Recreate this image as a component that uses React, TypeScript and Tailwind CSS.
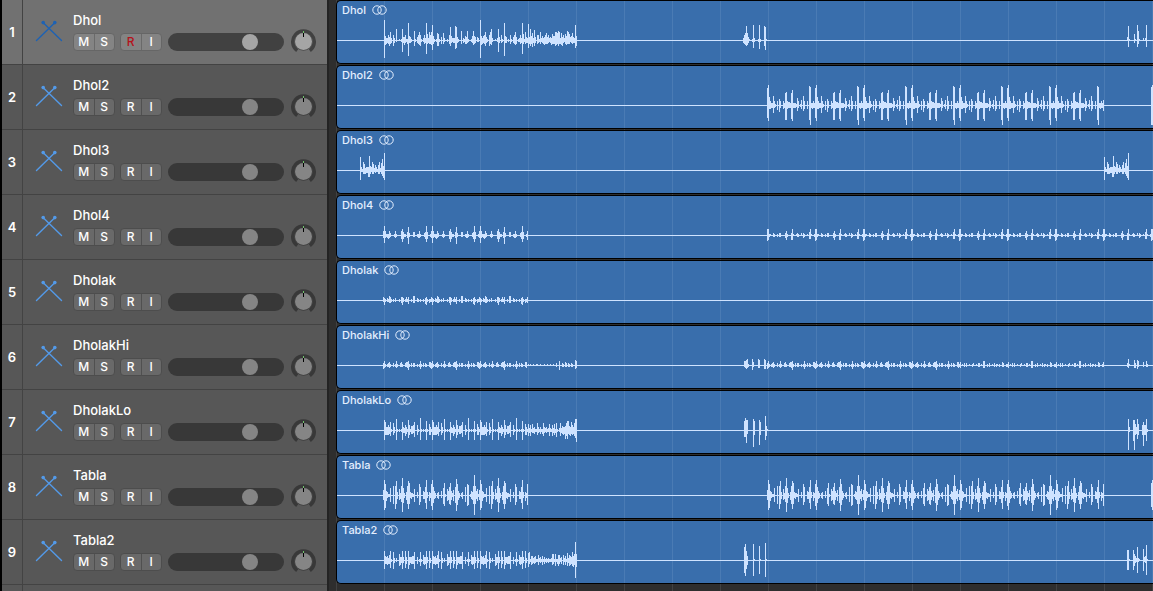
import clsx from 'clsx';
import React from 'react';

interface Segment {
  // distance in pixels from the start of the region
  at: number;
  // "x:up/down" for every column that leaves the zero line
  peaks: string;
  repeat?: number;
  period?: number;
}

interface Track {
  name: string;
  wave: Segment[];
}

const FILL_CLIP =
  '0:13/9 1:3/1 2:1/1 3:8/3 4:6/3 5:2/3 6:3/2 7:3/2 8:3/6 9:14/6 10:4/3 11:3/1 12:8/3 13:6/3 14:2/1 15:5/2 16:3/1 17:1/1 18:5/3 19:8/3 20:2/1 21:7/3 22:11/5 23:4/7 24:17/9';

const DHOL_BAR =
  '0:20/17 1:4/4 2:2/3 3:2/2 4:5/3 5:3/5 6:8/3 7:2/2 9:5/5 10:2/2 12:11/1 15:1/0 17:1/1 18:11/11 19:3/2 20:3/4 21:5/2 22:1/1 23:1/3 24:17/15 25:4/2 26:3/2 27:1/1 30:9/5 31:1/1 33:3/2 34:5/3 35:8/4 36:5/5 37:1/1 39:2/1 40:5/3 41:2/2 42:17/13 43:6/3 44:2/2 45:8/3 46:5/3 47:8/4 48:15/9 49:4/3 50:1/1 52:1/1 53:7/5 54:6/5 55:1/1 57:3/3 59:7/3 60:2/1 63:1/1 65:5/3 66:13/5 67:4/2 68:2/1 69:2/2 70:2/2 71:14/8 72:13/7 73:3/2 74:1/1 77:9/3 79:2/2 80:1/1 81:4/3 82:3/3 83:9/2 84:1/1 87:1/1 88:4/2 89:9/4 90:4/3 91:3/2 93:3/1 94:2/1';

const DHOL_REST =
  '0:20/17 1:4/4 2:2/3 3:4/2 4:5/3 5:8/5 6:3/2 7:1/1 9:5/5 10:8/3 11:11/4 12:2/1 15:1/0 17:2/1 18:11/11 19:3/2 21:5/2 22:1/1 24:17/15 25:4/2 26:3/2 28:1/1 30:5/3 31:1/1 33:3/2 34:5/3 35:8/4 36:3/3 38:1/1 39:2/1 40:5/3 41:2/2 42:17/13 43:6/3 44:1/1 45:8/3 46:3/2 47:2/2 48:16/7 49:3/3 50:11/5 51:4/3 52:7/6 53:2/2 54:10/5 55:3/2 57:5/3 58:5/2 59:1/1 60:8/3 61:2/1 62:4/2 63:2/3 64:3/4 65:5/3 66:7/3 67:3/3 68:5/2 69:2/1 70:3/2 71:2/4 72:6/3 73:4/3 74:4/3 75:8/5 76:8/4 77:7/3 78:9/5 79:8/3 80:2/3 81:7/4 82:3/5 83:5/2 84:2/1 85:6/3 86:4/4 87:9/3 88:8/3 89:6/3 90:3/1 91:4/2 92:7/3 93:3/2 94:2/2 95:15/7 96:4/5';

const DHOL2_BAR =
  '0:17/12 1:20/15 2:8/3 3:4/3 4:2/2 5:2/2 6:9/7 7:4/2 8:1/1 10:4/4 12:6/6 13:4/2 16:4/3 17:2/2 18:12/14 19:13/14 20:4/3 21:3/2 22:3/2 23:2/2 24:12/13 25:15/15 26:2/2 27:2/2 28:2/2 29:1/1 30:7/5 31:4/2 33:1/1 34:5/3 36:9/5 37:4/3 40:4/3 42:19/14 43:18/19 44:2/2 45:2/3 46:4/2 47:2/2';

const DHOL4_BAR =
  '0:4/2 1:9/7 2:4/2 3:1/1 4:1/2 5:1/3 6:4/2 7:2/1 11:1/1 12:4/2 13:1/1 18:4/3 19:6/6 20:3/3 21:1/1 22:1/1 24:3/2 25:8/8 26:2/1 30:3/1 31:3/1 34:1/1 35:1/2 36:4/2 37:1/1 41:2/1 42:3/3 43:9/6 44:3/3 47:1/1';

const DHOL4_SOFT =
  '0:6/5 1:6/4 2:1/1 3:1/0 6:2/1 7:1/1 10:1/1 12:2/1 13:2/1 18:2/2 19:4/4 20:1/1 24:2/4 25:6/4 26:1/0 29:1/0 30:2/1 31:1/1 34:2/0 36:2/2 37:1/1 40:1/0 42:3/3 43:6/3 44:1/0 47:1/1';

const DHOLAK_BAR =
  '0:3/1 1:2/4 2:1/1 4:2/1 5:1/1 6:4/2 7:3/2 8:1/1 10:1/1 12:2/1 16:1/1 18:3/2 19:3/4 20:2/1 22:1/1 23:3/1 24:1/1 25:3/3 28:1/1 30:4/2 31:4/2 34:2/1 35:1/1 37:1/1 40:1/1 42:2/3 43:3/4 44:1/1 46:1/2 47:1/1';

const HI_BAR =
  '0:2/3 1:4/2 2:1/1 4:1/1 5:2/1 6:3/2 7:1/1 10:2/1 12:1/1 13:4/2 14:1/1 17:2/1 18:3/1 19:1/1 22:2/1 23:3/1 24:3/2 25:4/4 26:1/1 28:2/1 30:2/1 31:2/1 34:1/1 36:1/1 37:4/3 38:1/1 40:2/1 42:2/1 43:1/1 46:3/1 47:3/2';

const HI_SOFT =
  '0:1/1 1:3/2 3:1/0 5:2/1 7:2/1 10:1/0 13:1/1 14:2/0 17:1/0 19:2/1 20:2/1 22:1/0 24:4/2 25:4/2 28:1/1 30:2/1 33:1/0 35:2/1 37:1/1 38:1/0 40:1/1 43:3/1 44:2/1 47:1/1';

const LO_BAR =
  '0:10/9 1:8/4 2:3/4 3:3/4 4:5/4 5:3/3 6:8/5 7:1/1 9:7/4 10:3/2 12:11/9 13:1/1 15:1/1 17:1/1 18:8/9 19:3/2 20:2/2 21:5/5 22:3/3 23:1/1 24:10/7 25:5/4 26:1/1 27:4/3 28:4/3 29:5/2 30:8/6 33:5/4 34:1/1 36:12/9 37:1/1 39:1/1 41:1/1 42:9/9 43:1/1 45:6/4 46:3/4 47:1/1';

const LO_ROLL =
  '0:6/5 1:2/2 2:5/5 3:1/1 4:6/2 5:2/2 6:3/3 7:1/1 8:1/1 9:7/4 10:3/2 11:1/1 12:3/3 13:1/1 14:1/3 15:7/5 16:3/2 17:2/1 18:3/2 19:1/1 20:2/1 21:6/5 22:2/1 23:1/1 24:5/5 25:2/2 26:6/4 27:1/2 28:7/6 29:1/1 31:2/1 32:7/5 33:2/2 34:4/3 35:3/4 36:3/3 37:4/8 38:7/5 39:9/8 40:9/3 41:4/4 42:3/5 43:8/3 44:5/4 45:3/3 46:7/5 47:11/7 48:11/11';

const TABLA_A =
  '0:5/4 1:15/14 2:11/12 3:4/5 4:3/2 5:1/1 6:1/1 7:7/6 10:9/8 12:9/13 13:14/8 14:3/3 16:6/4 17:2/3 18:9/6 19:17/16 20:7/7 21:2/2 23:3/4 24:9/8 25:14/13 26:12/8 27:3/2 28:2/3 29:2/1 30:1/1 31:6/6 34:3/2 36:11/9 37:8/6 40:4/3 41:3/3 42:8/7 43:15/13 44:3/2 46:3/5 47:2/2';

const TABLA_B =
  '0:11/10 1:15/14 2:8/7 3:4/3 4:2/2 6:2/2 7:3/3 10:4/2 12:7/8 13:12/10 14:1/1 16:6/5 17:4/4 18:8/8 19:12/9 20:4/4 21:2/1 22:5/5 24:8/7 25:16/15 26:11/9 27:4/4 28:2/2 30:2/1 31:3/3 34:8/6 36:11/10 37:10/9 39:1/1 40:4/3 41:3/4 42:9/8 43:20/19 44:9/8 45:4/3 46:6/5 47:1/1';

const TABLA2_BAR =
  '0:9/8 1:4/3 2:3/3 3:4/4 4:2/3 5:5/3 6:9/7 7:1/1 9:8/8 10:2/2 12:2/1 15:6/5 16:3/4 17:3/2 18:9/8 19:3/2 21:9/7 22:3/3 24:9/8 25:3/4 26:3/2 27:3/3 28:4/3 29:4/3 30:8/8 33:3/3 35:1/1 36:8/5 37:1/1 39:5/3 40:3/4 41:3/3 42:9/8 43:3/2 45:9/7 46:2/2';

const TABLA2_ROLL =
  '0:7/6 1:8/3 2:1/1 3:4/4 4:4/3 5:2/2 6:3/3 7:4/2 8:1/1 9:1/1 10:5/4 11:2/1 12:3/2 13:1/1 14:4/4 15:1/1 16:3/3 17:1/1 18:2/2 19:1/1 20:2/2 21:1/1 22:1/1 23:2/1 24:6/4 25:6/3 26:1/1 27:6/5 28:1/1 29:1/3 30:5/5 31:5/3 32:2/1 33:3/3 35:5/4 36:2/1 37:4/4 38:1/1 39:7/5 40:2/2 41:5/5 42:4/4 43:3/3 44:8/5 45:4/6 46:6/4 47:18/17 48:6/6';

const TRACKS: Track[] = [
  {
    name: 'Dhol',
    wave: [
      { at: 47, peaks: DHOL_BAR },
      { at: 143, peaks: DHOL_REST },
      {
        at: 406,
        peaks:
          '0:2/2 1:5/3 2:7/4 3:14/5 4:7/4 5:3/2 6:1/0 9:1/1 10:15/7 11:2/1 15:1/1 16:15/8 17:1/1 21:14/5 22:13/9 23:1/0',
      },
      {
        at: 790,
        peaks:
          '0:3/0 1:14/6 2:1/0 7:6/2 8:1/0 10:15/6 11:9/3 12:1/0 16:2/0 18:2/0 19:15/6',
      },
    ],
  },
  {
    name: 'Dhol2',
    wave: [
      { at: 430, peaks: DHOL2_BAR, repeat: 7, period: 48 },
      { at: 766, peaks: '0:5/5' },
      { at: 814, peaks: '0:18/19 1:20/19' },
    ],
  },
  {
    name: 'Dhol3',
    wave: [
      { at: 23, peaks: FILL_CLIP },
      { at: 767, peaks: FILL_CLIP },
    ],
  },
  {
    name: 'Dhol4',
    wave: [
      { at: 46, peaks: DHOL4_BAR, repeat: 3, period: 48 },
      { at: 190, peaks: '0:4/4' },
      { at: 430, peaks: DHOL4_SOFT, repeat: 8, period: 48 },
      { at: 814, peaks: '0:6/5 1:6/4' },
    ],
  },
  {
    name: 'Dholak',
    wave: [
      { at: 46, peaks: DHOLAK_BAR, repeat: 3, period: 48 },
      { at: 190, peaks: '0:3/2' },
    ],
  },
  {
    name: 'DholakHi',
    wave: [
      { at: 46, peaks: HI_BAR, repeat: 3, period: 48 },
      {
        at: 191,
        peaks:
          '0:1/0 2:1/0 5:1/0 8:1/0 9:1/0 12:1/0 16:1/0 19:1/0 22:1/0 25:1/0 28:2/1 31:4/4 34:2/1 35:1/1 37:3/1 38:2/1 40:2/1 41:1/1 43:2/1 44:1/1 47:5/3 48:4/2',
      },
      {
        at: 407,
        peaks:
          '0:4/1 1:4/2 2:5/3 3:6/2 4:1/1 8:6/4 9:3/1 14:6/2 15:5/2 20:6/3 21:5/3',
      },
      { at: 430, peaks: HI_BAR, repeat: 4, period: 48 },
      { at: 622, peaks: HI_SOFT, repeat: 3, period: 48 },
      { at: 766, peaks: '0:3/1' },
      {
        at: 790,
        peaks:
          '0:2/1 1:6/2 2:1/0 7:5/2 8:2/2 10:5/3 11:4/1 16:3/1 19:4/1 20:1/1',
      },
    ],
  },
  {
    name: 'DholakLo',
    wave: [
      { at: 47, peaks: LO_BAR, repeat: 3, period: 48 },
      { at: 191, peaks: LO_ROLL },
      {
        at: 407,
        peaks:
          '0:9/6 1:12/6 2:10/12 3:10/3 9:11/16 10:9/4 15:10/14 16:8/4 21:14/9 22:4/5 23:1/0',
      },
      {
        at: 791,
        peaks:
          '0:11/19 1:3/1 5:10/10 6:10/19 7:6/4 8:3/3 9:11/8 10:6/4 14:5/4 15:8/15 16:5/4 17:5/4 18:11/10 19:1/1',
      },
    ],
  },
  {
    name: 'Tabla',
    wave: [
      { at: 46, peaks: TABLA_A, repeat: 2, period: 96 },
      { at: 94, peaks: TABLA_B },
      { at: 190, peaks: '0:11/9' },
      { at: 430, peaks: TABLA_A, repeat: 4, period: 96 },
      { at: 478, peaks: TABLA_B, repeat: 3, period: 96 },
      { at: 766, peaks: '0:11/10' },
      { at: 814, peaks: '0:12/11 1:15/14' },
    ],
  },
  {
    name: 'Tabla2',
    wave: [
      { at: 47, peaks: TABLA2_BAR, repeat: 3, period: 48 },
      { at: 191, peaks: TABLA2_ROLL },
      {
        at: 407,
        peaks:
          '0:13/12 1:16/15 2:9/8 3:4/4 9:16/15 10:1/0 15:14/13 16:1/0 21:17/16 22:1/0',
      },
      {
        at: 790,
        peaks:
          '0:10/9 1:10/9 2:1/0 6:10/9 7:6/5 8:4/2 9:2/1 10:13/12 11:2/1 12:1/0 16:11/10 17:3/1 18:4/2 19:15/14 20:1/0',
      },
    ],
  },
];

// y of the zero line inside a region
const ZERO = 39;

const wavePath = (wave: Segment[]) =>
  wave
    .flatMap(({ at, peaks, repeat = 1, period = 0 }) =>
      Array.from({ length: repeat }, (_, i) =>
        peaks.split(' ').map((peak) => {
          const [x, up, down] = peak.split(/[:/]/).map(Number);
          const height = up + down + 1;
          return `M${at + i * period + x} ${ZERO - up}h1v${height}h-1z`;
        })
      )
    )
    .flat()
    .join('');

const Sticks: React.FunctionComponent<{ selected: boolean }> = ({
  selected,
}) => (
  <svg
    width="28"
    height="24"
    viewBox="0 0 28 24"
    className={selected ? 'text-[#1d62b4]' : 'text-[#539ae9]'}
    aria-hidden="true"
  >
    <path
      d="M8 3.5 26.5 21.5M20 3.5 1.5 21.5"
      stroke="currentColor"
      strokeWidth="1.4"
      strokeLinecap="round"
    />
    <circle cx="8.2" cy="3.6" r="1.8" fill="currentColor" />
    <circle cx="19.8" cy="3.6" r="1.8" fill="currentColor" />
  </svg>
);

const StereoMark = () => (
  <svg
    width="15"
    height="10"
    viewBox="0 0 15 10"
    fill="none"
    stroke="currentColor"
    aria-hidden="true"
  >
    <circle cx="5" cy="5" r="4.2" />
    <circle cx="10" cy="5" r="4.2" />
  </svg>
);

const ButtonPair: React.FunctionComponent<{
  labels: string[];
  track: string;
  selected: boolean;
}> = ({ labels, track, selected }) => (
  <div
    className={clsx(
      'flex h-[18px] w-[42px] divide-x overflow-hidden rounded border text-xs font-medium',
      selected
        ? 'divide-[#6a6a6a] border-[#666] bg-[#848484]'
        : 'divide-[#505050] border-[#4d4d4d] bg-[#696969]'
    )}
  >
    {labels.map((label) => (
      <button
        key={label}
        type="button"
        aria-label={`${label} ${track}`}
        className={clsx(
          'flex flex-1 items-center justify-center leading-4',
          selected && label === 'R' ? 'text-[#b5121b]' : 'text-white'
        )}
      >
        {label}
      </button>
    ))}
  </div>
);

const PanKnob: React.FunctionComponent<{
  track: string;
  selected: boolean;
}> = ({ track, selected }) => (
  <button type="button" aria-label={`Pan ${track}`} className="block">
    <svg width="25" height="26" viewBox="0 0 25 26">
      <path
        d="M6.2 21.6A10.8 10.8 0 1 1 18.8 21.6"
        fill="none"
        stroke={selected ? '#414141' : '#383838'}
        strokeWidth="3.4"
      />
      <circle
        cx="12.5"
        cy="12.5"
        r="9.2"
        fill={selected ? '#4b4b4b' : '#3c3c3c'}
      />
      <circle
        cx="12.5"
        cy="12.5"
        r="8.5"
        fill={selected ? '#a5a5a5' : '#858585'}
      />
      <path d="M12.5 2v3" stroke="#6fc36b" />
      <path d="M12.5 4v4" stroke="#000" />
    </svg>
  </button>
);

const TrackHeader: React.FunctionComponent<{
  track: Track;
  index: number;
}> = ({ track, index }) => {
  const selected = index === 0;

  return (
    <div
      className={clsx(
        'flex h-[65px] border-b border-[#434343]',
        selected ? 'bg-[#717171]' : 'bg-[#575757]'
      )}
    >
      <div className="flex w-[21px] items-center justify-center border-r border-[#434343] pt-0.5 text-[13px] font-semibold">
        {index + 1}
      </div>
      <div className="pt-[19px] pr-[10px] pl-3">
        <Sticks selected={selected} />
      </div>
      <div className="flex-1 pt-3">
        <div className="text-[13px] leading-4 font-medium">{track.name}</div>
        <div className="flex h-7 items-center">
          <ButtonPair
            labels={['M', 'S']}
            track={track.name}
            selected={selected}
          />
          <div className="w-[5px]" />
          <ButtonPair
            labels={['R', 'I']}
            track={track.name}
            selected={selected}
          />
          <input
            type="range"
            aria-label={`Volume ${track.name}`}
            defaultValue={74}
            className={clsx(
              'mr-[7px] ml-[6px] h-[18px] w-[116px] appearance-none rounded-full [&::-webkit-slider-thumb]:size-4 [&::-webkit-slider-thumb]:appearance-none [&::-webkit-slider-thumb]:rounded-full',
              selected
                ? 'bg-[#414141] [&::-webkit-slider-thumb]:bg-[#a5a5a5]'
                : 'bg-[#383838] [&::-webkit-slider-thumb]:bg-[#858585]'
            )}
          />
          <PanKnob track={track.name} selected={selected} />
        </div>
      </div>
    </div>
  );
};

const Region: React.FunctionComponent<{ track: Track }> = ({ track }) => (
  <div className="mb-px h-16 overflow-hidden rounded-l-[5px] border-y border-l border-black bg-[#396eac] bg-[linear-gradient(to_right,#4a7bb4_1px,transparent_1px)] bg-size-[48px_100%] bg-position-[-1px_0] text-[#e4efff]">
    <div className="grid">
      <div className="col-start-1 row-start-1 flex h-[17px] items-center gap-[6px] pl-[5px] text-[11px] leading-4 font-medium">
        {track.name}
        <StereoMark />
      </div>
      <svg
        className="col-start-1 row-start-1 h-[62px] w-full text-[#cfe3ff]"
        fill="currentColor"
        shapeRendering="crispEdges"
        role="img"
        aria-label={`${track.name} waveform`}
      >
        <rect y={ZERO} width="100%" height="1" />
        <path d={wavePath(track.wave)} />
      </svg>
    </div>
  </div>
);

const App = () => (
  <div className="flex h-screen overflow-hidden bg-[#2e2e2e] font-['Inter',sans-serif] text-white">
    <div className="w-[327px] shrink-0 border-l-2 border-black">
      {TRACKS.map((track, index) => (
        <TrackHeader key={track.name} track={track} index={index} />
      ))}
      <div className="flex h-[65px] bg-[#575757]">
        <div className="w-[21px] border-r border-[#434343]" />
      </div>
    </div>
    <div className="w-[9px] shrink-0 border-l-2 border-[#232323] bg-[#2e2e2e]" />
    <div className="min-w-0 flex-1 bg-[linear-gradient(to_right,#414141_1px,transparent_1px)] bg-size-[48px_100%]">
      {TRACKS.map((track) => (
        <Region key={track.name} track={track} />
      ))}
    </div>
  </div>
);

export default App;
